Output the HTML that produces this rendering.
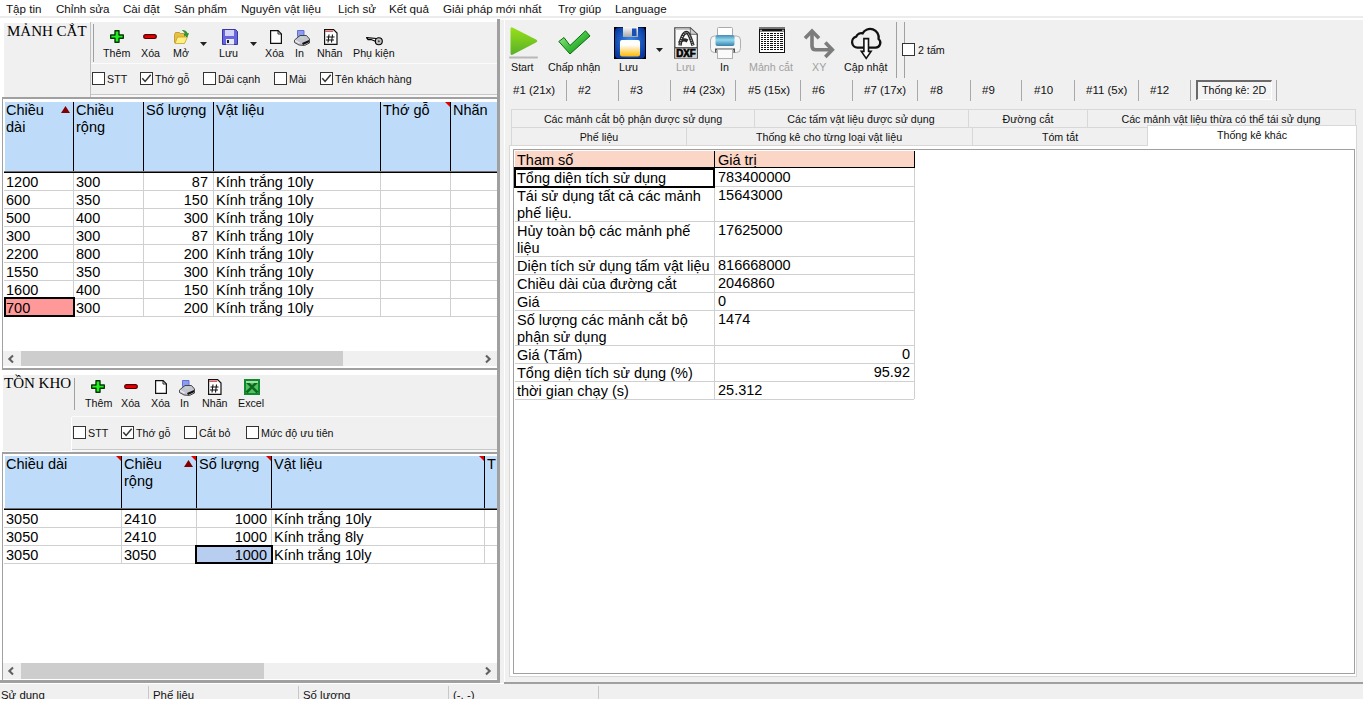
<!DOCTYPE html><html><head><meta charset="utf-8"><style>
*{margin:0;padding:0;box-sizing:border-box}
html,body{width:1366px;height:726px;overflow:hidden;background:#fff;font-family:"Liberation Sans",sans-serif;color:#000}
.a{position:absolute}
.t{position:absolute;white-space:nowrap;line-height:1}
.ml{font-family:"Liberation Serif",serif;font-size:15px;color:#000}
.tb{font-size:10.7px;color:#111}
.tn{font-size:11.5px;color:#111}
.gr{color:#a0a0a0}
.mn{font-size:11.6px;color:#111}
.st{font-size:11.4px;color:#111}
.g{font-size:14.5px;color:#000}
svg{position:absolute;overflow:visible}
</style></head><body>
<div class="t mn" style="left:6px;top:3px;">Tập tin</div>
<div class="t mn" style="left:56px;top:3px;">Chỉnh sửa</div>
<div class="t mn" style="left:123px;top:3px;">Cài đặt</div>
<div class="t mn" style="left:174px;top:3px;">Sản phẩm</div>
<div class="t mn" style="left:241px;top:3px;">Nguyên vật liệu</div>
<div class="t mn" style="left:338px;top:3px;">Lịch sử</div>
<div class="t mn" style="left:389px;top:3px;">Kết quả</div>
<div class="t mn" style="left:443px;top:3px;">Giải pháp mới nhất</div>
<div class="t mn" style="left:558px;top:3px;">Trợ giúp</div>
<div class="t mn" style="left:615px;top:3px;">Language</div>
<div class="a" style="left:0px;top:16px;width:1363px;height:2px;background:#ececec"></div>
<div class="a" style="left:497px;top:19px;width:3px;height:664px;background:#a0a0a0"></div>
<div class="a" style="left:500px;top:20px;width:4px;height:663px;background:#f0f0f0"></div>
<div class="a" style="left:504px;top:20px;width:1px;height:663px;background:#fff"></div>
<div class="a" style="left:4px;top:23px;width:86px;height:74px;background:#f0f0f0"></div>
<div class="t ml" style="left:7px;top:24px;">MẢNH CẮT</div>
<div class="a" style="left:90px;top:22px;width:1px;height:75px;background:#c0c0c0"></div>
<div class="a" style="left:91px;top:22px;width:406px;height:41px;background:#f0f0f0"></div>
<div class="a" style="left:93px;top:24px;width:1px;height:38px;background:#a0a0a0"></div>
<div class="a" style="left:91px;top:63px;width:406px;height:1px;background:#fbfbfb"></div>
<div class="a" style="left:91px;top:64px;width:406px;height:30px;background:#f0f0f0"></div>
<div class="a" style="left:91px;top:94px;width:406px;height:1px;background:#c8c8c8"></div>
<div class="a" style="left:91px;top:95px;width:406px;height:2px;background:#f8f8f8"></div>
<svg style="left:110px;top:30px" width="14" height="13" viewBox="0 0 14 13"><path d="M5 0.7h4v4.3h4.3v3.3h-4.3v4h-4v-4h-4.3v-3.3h4.3z" fill="#20f020" stroke="#063806" stroke-width="1.4" stroke-linejoin="round"/></svg>
<svg style="left:143px;top:34px" width="14" height="5" viewBox="0 0 14 5"><rect x="0.7" y="0.7" width="12.6" height="3.8" rx="1.9" fill="#e80000" stroke="#500000" stroke-width="1.2"/></svg>
<svg style="left:174px;top:30px" width="15" height="14" viewBox="0 0 15 14"><path d="M0.5 4.5l1-2h4l1 1h4v9h-10z" fill="#e8c040" stroke="#b89020" stroke-width="0.8"/><path d="M1 13.5l2.5-6.5h10l-3 6.5z" fill="#fff080" stroke="#c0a030" stroke-width="0.8"/><path d="M8.5 0.5c2.5 0 4.5 1 5 3.5l1-0.5-1.5 3.5-3-2.5 1.5-0.3C11 2.5 10 1.5 8.5 0.5z" fill="#30a030" stroke="#107010" stroke-width="0.6"/></svg>
<svg style="left:200px;top:42px" width="7" height="4" viewBox="0 0 7 4"><path d="M0 0h7l-3.5 4z" fill="#222"/></svg>
<svg style="left:222px;top:29px" width="16" height="16" viewBox="0 0 16 16"><path d="M0.5 0.5h13l2 2v13h-15z" fill="#6666dd" stroke="#3838a0"/><rect x="3" y="1" width="9" height="6" fill="#d4d4fa"/><rect x="4" y="10" width="8" height="5.5" fill="#e8e8f8"/><rect x="5" y="11" width="2" height="3" fill="#222"/></svg>
<svg style="left:250px;top:42px" width="7" height="4" viewBox="0 0 7 4"><path d="M0 0h7l-3.5 4z" fill="#222"/></svg>
<svg style="left:270px;top:30px" width="12" height="14" viewBox="0 0 12 14"><path d="M0.6 0.6h7.5l3.3 3.3v9.5h-10.8z" fill="#fff" stroke="#111" stroke-width="1.2"/><path d="M8 0.6v3.4h3.4" fill="none" stroke="#111" stroke-width="0.9"/></svg>
<svg style="left:294px;top:29px" width="16" height="17" viewBox="0 0 16 17"><path d="M3.5 1.5h6.5v6h-6.5z" fill="#8c9cf4" stroke="#5868c8" stroke-width="0.9"/><path d="M0.5 11L6 6.5h6.5L15.5 10v4l-5 2.5l-5.5-0.5L0.5 13.5z" fill="#c4c4d0" stroke="#383838" stroke-width="0.9"/><path d="M1 11.5l4.5 2.5" stroke="#f0f0f0" stroke-width="1.2"/><path d="M8 14l7-3v2.2l-6 2.8z" fill="#111"/><rect x="6" y="8" width="4" height="1.3" fill="#b8dcb8"/></svg>
<svg style="left:324px;top:29px" width="14" height="16" viewBox="0 0 14 16"><path d="M0.6 0.6h9l3.4 3.4v11.4h-12.4z" fill="#fff" stroke="#111" stroke-width="1.2"/><rect x="1.2" y="1.8" width="8" height="1" fill="#e03030"/><path d="M5 5.5l-1 8M8.5 5.5l-1 8M2.5 8h8M2 11h8" stroke="#111" stroke-width="1.1"/></svg>
<svg style="left:366px;top:37px" width="17" height="9" viewBox="0 0 17 9"><path d="M0.5 0.6L10.5 1.5L10 4.6L5 2.5L2 2.6z" fill="#fff" stroke="#000" stroke-width="1.1" stroke-linejoin="round"/><circle cx="12.8" cy="4.3" r="3.5" fill="#c0c0c0" stroke="#000" stroke-width="1.1"/><circle cx="12.8" cy="4.3" r="1" fill="#444"/></svg>
<div class="t tb" style="left:103px;top:48px;">Thêm</div>
<div class="t tb" style="left:141px;top:48px;">Xóa</div>
<div class="t tb" style="left:173px;top:48px;">Mở</div>
<div class="t tb" style="left:219px;top:48px;">Lưu</div>
<div class="t tb" style="left:265px;top:48px;">Xóa</div>
<div class="t tb" style="left:295px;top:48px;">In</div>
<div class="t tb" style="left:317px;top:48px;">Nhãn</div>
<div class="t tb" style="left:353px;top:48px;">Phụ kiện</div>
<div class="a" style="left:92px;top:72px;width:13px;height:13px;background:#fff;border:1px solid #333"></div>
<div class="t tb" style="left:107px;top:74px;">STT</div>
<div class="a" style="left:140px;top:72px;width:13px;height:13px;background:#fff;border:1px solid #333"></div>
<svg style="left:140px;top:72px" width="13" height="13" viewBox="0 0 13 13"><path d="M2.3 6.2l2.8 3.2l5.6-6.6" fill="none" stroke="#333" stroke-width="1.5"/></svg>
<div class="t tb" style="left:155px;top:74px;">Thớ gỗ</div>
<div class="a" style="left:203px;top:72px;width:13px;height:13px;background:#fff;border:1px solid #333"></div>
<div class="t tb" style="left:218px;top:74px;">Dải cạnh</div>
<div class="a" style="left:274px;top:72px;width:13px;height:13px;background:#fff;border:1px solid #333"></div>
<div class="t tb" style="left:289px;top:74px;">Mài</div>
<div class="a" style="left:320px;top:72px;width:13px;height:13px;background:#fff;border:1px solid #333"></div>
<svg style="left:320px;top:72px" width="13" height="13" viewBox="0 0 13 13"><path d="M2.3 6.2l2.8 3.2l5.6-6.6" fill="none" stroke="#333" stroke-width="1.5"/></svg>
<div class="t tb" style="left:335px;top:74px;">Tên khách hàng</div>
<div class="a" style="left:2px;top:97px;width:495px;height:2px;background:#a0a0a0"></div>
<div class="a" style="left:2px;top:99px;width:1px;height:270px;background:#a0a0a0"></div>
<div class="a" style="left:3px;top:99px;width:494px;height:252px;background:#fff"></div>
<div class="a" style="left:5px;top:102px;width:492px;height:69px;background:#bedcfa"></div>
<div class="a" style="left:73px;top:102px;width:1px;height:69px;background:#000"></div>
<div class="a" style="left:73px;top:173px;width:1px;height:144px;background:#d0d0d0"></div>
<div class="a" style="left:143px;top:102px;width:1px;height:69px;background:#000"></div>
<div class="a" style="left:143px;top:173px;width:1px;height:144px;background:#d0d0d0"></div>
<div class="a" style="left:213px;top:102px;width:1px;height:69px;background:#000"></div>
<div class="a" style="left:213px;top:173px;width:1px;height:144px;background:#d0d0d0"></div>
<div class="a" style="left:380px;top:102px;width:1px;height:69px;background:#000"></div>
<div class="a" style="left:380px;top:173px;width:1px;height:144px;background:#d0d0d0"></div>
<div class="a" style="left:450px;top:102px;width:1px;height:69px;background:#000"></div>
<div class="a" style="left:450px;top:173px;width:1px;height:144px;background:#d0d0d0"></div>
<div class="a" style="left:4px;top:171px;width:493px;height:1px;background:#707070"></div>
<div class="a" style="left:4px;top:172px;width:493px;height:1px;background:#000"></div>
<div class="a" style="left:4px;top:190px;width:493px;height:1px;background:#d0d0d0"></div>
<div class="a" style="left:4px;top:208px;width:493px;height:1px;background:#d0d0d0"></div>
<div class="a" style="left:4px;top:226px;width:493px;height:1px;background:#d0d0d0"></div>
<div class="a" style="left:4px;top:244px;width:493px;height:1px;background:#d0d0d0"></div>
<div class="a" style="left:4px;top:262px;width:493px;height:1px;background:#d0d0d0"></div>
<div class="a" style="left:4px;top:280px;width:493px;height:1px;background:#d0d0d0"></div>
<div class="a" style="left:4px;top:298px;width:493px;height:1px;background:#d0d0d0"></div>
<div class="a" style="left:4px;top:316px;width:493px;height:1px;background:#d0d0d0"></div>
<div class="t g" style="left:6px;top:102px;line-height:17px">Chiều<br>dài</div>
<div class="t g" style="left:76px;top:102px;line-height:17px">Chiều<br>rộng</div>
<div class="t g" style="left:146px;top:102px;line-height:17px">Số lượng</div>
<div class="t g" style="left:216px;top:102px;line-height:17px">Vật liệu</div>
<div class="t g" style="left:383px;top:102px;line-height:17px">Thớ gỗ</div>
<div class="t g" style="left:453px;top:102px;line-height:17px">Nhãn</div>
<svg style="left:61px;top:106px" width="9" height="7" viewBox="0 0 9 7"><path d="M4.5 0l4.5 7h-9z" fill="#800000"/></svg>
<svg style="left:445px;top:102px" width="5" height="5" viewBox="0 0 5 5"><path d="M0 0h5v5z" fill="#e00000"/></svg>
<div class="t g" style="left:6px;top:175px;">1200</div>
<div class="t g" style="left:76px;top:175px;">300</div>
<div class="t g" style="right:1158px;top:175px;">87</div>
<div class="t g" style="left:216px;top:175px;">Kính trắng 10ly</div>
<div class="t g" style="left:6px;top:193px;">600</div>
<div class="t g" style="left:76px;top:193px;">350</div>
<div class="t g" style="right:1158px;top:193px;">150</div>
<div class="t g" style="left:216px;top:193px;">Kính trắng 10ly</div>
<div class="t g" style="left:6px;top:211px;">500</div>
<div class="t g" style="left:76px;top:211px;">400</div>
<div class="t g" style="right:1158px;top:211px;">300</div>
<div class="t g" style="left:216px;top:211px;">Kính trắng 10ly</div>
<div class="t g" style="left:6px;top:229px;">300</div>
<div class="t g" style="left:76px;top:229px;">300</div>
<div class="t g" style="right:1158px;top:229px;">87</div>
<div class="t g" style="left:216px;top:229px;">Kính trắng 10ly</div>
<div class="t g" style="left:6px;top:247px;">2200</div>
<div class="t g" style="left:76px;top:247px;">800</div>
<div class="t g" style="right:1158px;top:247px;">200</div>
<div class="t g" style="left:216px;top:247px;">Kính trắng 10ly</div>
<div class="t g" style="left:6px;top:265px;">1550</div>
<div class="t g" style="left:76px;top:265px;">350</div>
<div class="t g" style="right:1158px;top:265px;">300</div>
<div class="t g" style="left:216px;top:265px;">Kính trắng 10ly</div>
<div class="t g" style="left:6px;top:283px;">1600</div>
<div class="t g" style="left:76px;top:283px;">400</div>
<div class="t g" style="right:1158px;top:283px;">150</div>
<div class="t g" style="left:216px;top:283px;">Kính trắng 10ly</div>
<div class="a" style="left:4px;top:297px;width:71px;height:20px;background:#ff9999;border:2px solid #000"></div>
<div class="t g" style="left:6px;top:301px;">700</div>
<div class="t g" style="left:76px;top:301px;">300</div>
<div class="t g" style="right:1158px;top:301px;">200</div>
<div class="t g" style="left:216px;top:301px;">Kính trắng 10ly</div>
<div class="a" style="left:3px;top:351px;width:494px;height:15px;background:#f0f0f0"></div>
<div class="a" style="left:21px;top:351px;width:322px;height:15px;background:#cdcdcd"></div>
<svg style="left:8px;top:355px" width="6" height="9" viewBox="0 0 6 9"><path d="M5 0.6L1.4 4L5 7.4" fill="none" stroke="#606060" stroke-width="2.1"/></svg>
<svg style="left:485px;top:355px" width="6" height="9" viewBox="0 0 6 9"><path d="M1 0.6L4.6 4L1 7.4" fill="none" stroke="#606060" stroke-width="2.1"/></svg>
<div class="a" style="left:2px;top:368px;width:495px;height:2px;background:#a0a0a0"></div>
<div class="a" style="left:3px;top:375px;width:68px;height:76px;background:#f0f0f0"></div>
<div class="t ml" style="left:4px;top:376px;">TỒN KHO</div>
<div class="a" style="left:71px;top:375px;width:426px;height:42px;background:#f0f0f0"></div>
<div class="a" style="left:74px;top:378px;width:1px;height:32px;background:#a0a0a0"></div>
<div class="a" style="left:72px;top:416px;width:425px;height:1px;background:#fbfbfb"></div>
<div class="a" style="left:72px;top:417px;width:425px;height:32px;background:#f0f0f0"></div>
<div class="a" style="left:72px;top:449px;width:425px;height:1px;background:#c8c8c8"></div>
<div class="a" style="left:72px;top:450px;width:425px;height:2px;background:#f8f8f8"></div>
<svg style="left:91px;top:380px" width="14" height="13" viewBox="0 0 14 13"><path d="M5 0.7h4v4.3h4.3v3.3h-4.3v4h-4v-4h-4.3v-3.3h4.3z" fill="#20f020" stroke="#063806" stroke-width="1.4" stroke-linejoin="round"/></svg>
<svg style="left:124px;top:384px" width="14" height="5" viewBox="0 0 14 5"><rect x="0.7" y="0.7" width="12.6" height="3.8" rx="1.9" fill="#e80000" stroke="#500000" stroke-width="1.2"/></svg>
<svg style="left:155px;top:380px" width="12" height="14" viewBox="0 0 12 14"><path d="M0.6 0.6h7.5l3.3 3.3v9.5h-10.8z" fill="#fff" stroke="#111" stroke-width="1.2"/><path d="M8 0.6v3.4h3.4" fill="none" stroke="#111" stroke-width="0.9"/></svg>
<svg style="left:179px;top:379px" width="16" height="17" viewBox="0 0 16 17"><path d="M3.5 1.5h6.5v6h-6.5z" fill="#8c9cf4" stroke="#5868c8" stroke-width="0.9"/><path d="M0.5 11L6 6.5h6.5L15.5 10v4l-5 2.5l-5.5-0.5L0.5 13.5z" fill="#c4c4d0" stroke="#383838" stroke-width="0.9"/><path d="M1 11.5l4.5 2.5" stroke="#f0f0f0" stroke-width="1.2"/><path d="M8 14l7-3v2.2l-6 2.8z" fill="#111"/><rect x="6" y="8" width="4" height="1.3" fill="#b8dcb8"/></svg>
<svg style="left:208px;top:379px" width="14" height="16" viewBox="0 0 14 16"><path d="M0.6 0.6h9l3.4 3.4v11.4h-12.4z" fill="#fff" stroke="#111" stroke-width="1.2"/><rect x="1.2" y="1.8" width="8" height="1" fill="#e03030"/><path d="M5 5.5l-1 8M8.5 5.5l-1 8M2.5 8h8M2 11h8" stroke="#111" stroke-width="1.1"/></svg>
<svg style="left:244px;top:379px" width="16" height="16" viewBox="0 0 16 16"><rect x="0" y="0" width="16" height="16" fill="#108a30"/><rect x="2" y="2" width="12" height="12" fill="#58c060"/><path d="M2.5 2.5l11 11M13.5 2.5l-11 11" stroke="#0a6a20" stroke-width="2.6"/><rect x="2" y="2" width="12" height="2" fill="#9ee0a0"/></svg>
<div class="t tb" style="left:85px;top:398px;">Thêm</div>
<div class="t tb" style="left:121px;top:398px;">Xóa</div>
<div class="t tb" style="left:151px;top:398px;">Xóa</div>
<div class="t tb" style="left:180px;top:398px;">In</div>
<div class="t tb" style="left:202px;top:398px;">Nhãn</div>
<div class="t tb" style="left:238px;top:398px;">Excel</div>
<div class="a" style="left:73px;top:426px;width:13px;height:13px;background:#fff;border:1px solid #333"></div>
<div class="t tb" style="left:88px;top:428px;">STT</div>
<div class="a" style="left:121px;top:426px;width:13px;height:13px;background:#fff;border:1px solid #333"></div>
<svg style="left:121px;top:426px" width="13" height="13" viewBox="0 0 13 13"><path d="M2.3 6.2l2.8 3.2l5.6-6.6" fill="none" stroke="#333" stroke-width="1.5"/></svg>
<div class="t tb" style="left:136px;top:428px;">Thớ gỗ</div>
<div class="a" style="left:184px;top:426px;width:13px;height:13px;background:#fff;border:1px solid #333"></div>
<div class="t tb" style="left:199px;top:428px;">Cắt bỏ</div>
<div class="a" style="left:246px;top:426px;width:13px;height:13px;background:#fff;border:1px solid #333"></div>
<div class="t tb" style="left:261px;top:428px;">Mức độ ưu tiên</div>
<div class="a" style="left:2px;top:452px;width:495px;height:2px;background:#a0a0a0"></div>
<div class="a" style="left:2px;top:454px;width:1px;height:227px;background:#a0a0a0"></div>
<div class="a" style="left:3px;top:454px;width:494px;height:209px;background:#fff"></div>
<div class="a" style="left:5px;top:456px;width:492px;height:52px;background:#bedcfa"></div>
<div class="a" style="left:121px;top:456px;width:1px;height:52px;background:#000"></div>
<div class="a" style="left:121px;top:510px;width:1px;height:54px;background:#d0d0d0"></div>
<div class="a" style="left:196px;top:456px;width:1px;height:52px;background:#000"></div>
<div class="a" style="left:196px;top:510px;width:1px;height:54px;background:#d0d0d0"></div>
<div class="a" style="left:271px;top:456px;width:1px;height:52px;background:#000"></div>
<div class="a" style="left:271px;top:510px;width:1px;height:54px;background:#d0d0d0"></div>
<div class="a" style="left:484px;top:456px;width:1px;height:52px;background:#000"></div>
<div class="a" style="left:484px;top:510px;width:1px;height:54px;background:#d0d0d0"></div>
<div class="a" style="left:4px;top:508px;width:493px;height:1px;background:#707070"></div>
<div class="a" style="left:4px;top:509px;width:493px;height:1px;background:#000"></div>
<div class="a" style="left:4px;top:527px;width:493px;height:1px;background:#d0d0d0"></div>
<div class="a" style="left:4px;top:545px;width:493px;height:1px;background:#d0d0d0"></div>
<div class="a" style="left:4px;top:563px;width:493px;height:1px;background:#d0d0d0"></div>
<div class="t g" style="left:6px;top:456px;line-height:17px">Chiều dài</div>
<div class="t g" style="left:124px;top:456px;line-height:17px">Chiều<br>rộng</div>
<div class="t g" style="left:199px;top:456px;line-height:17px">Số lượng</div>
<div class="t g" style="left:274px;top:456px;line-height:17px">Vật liệu</div>
<div class="t g" style="left:487px;top:456px;line-height:17px">T</div>
<svg style="left:116px;top:456px" width="5" height="5" viewBox="0 0 5 5"><path d="M0 0h5v5z" fill="#e00000"/></svg>
<svg style="left:191px;top:456px" width="5" height="5" viewBox="0 0 5 5"><path d="M0 0h5v5z" fill="#e00000"/></svg>
<svg style="left:266px;top:456px" width="5" height="5" viewBox="0 0 5 5"><path d="M0 0h5v5z" fill="#e00000"/></svg>
<svg style="left:479px;top:456px" width="5" height="5" viewBox="0 0 5 5"><path d="M0 0h5v5z" fill="#e00000"/></svg>
<svg style="left:184px;top:460px" width="9" height="7" viewBox="0 0 9 7"><path d="M4.5 0l4.5 7h-9z" fill="#800000"/></svg>
<div class="t g" style="left:6px;top:512px;">3050</div>
<div class="t g" style="left:124px;top:512px;">2410</div>
<div class="t g" style="right:1099px;top:512px;">1000</div>
<div class="t g" style="left:274px;top:512px;">Kính trắng 10ly</div>
<div class="t g" style="left:6px;top:530px;">3050</div>
<div class="t g" style="left:124px;top:530px;">2410</div>
<div class="t g" style="right:1099px;top:530px;">1000</div>
<div class="t g" style="left:274px;top:530px;">Kính trắng 8ly</div>
<div class="a" style="left:195px;top:545px;width:78px;height:19px;background:#b8cef0;border:2px solid #000"></div>
<div class="t g" style="left:6px;top:548px;">3050</div>
<div class="t g" style="left:124px;top:548px;">3050</div>
<div class="t g" style="right:1099px;top:548px;">1000</div>
<div class="t g" style="left:274px;top:548px;">Kính trắng 10ly</div>
<div class="a" style="left:3px;top:663px;width:494px;height:16px;background:#f0f0f0"></div>
<div class="a" style="left:21px;top:663px;width:243px;height:16px;background:#cdcdcd"></div>
<svg style="left:8px;top:667px" width="6" height="9" viewBox="0 0 6 9"><path d="M5 0.6L1.4 4L5 7.4" fill="none" stroke="#606060" stroke-width="2.1"/></svg>
<svg style="left:485px;top:667px" width="6" height="9" viewBox="0 0 6 9"><path d="M1 0.6L4.6 4L1 7.4" fill="none" stroke="#606060" stroke-width="2.1"/></svg>
<div class="a" style="left:0px;top:680px;width:497px;height:3px;background:#a0a0a0"></div>
<div class="a" style="left:505px;top:20px;width:858px;height:662px;background:#f0f0f0"></div>
<div class="a" style="left:504px;top:682px;width:859px;height:2px;background:#a0a0a0"></div>
<svg style="left:509px;top:26px" width="30" height="33" viewBox="0 0 30 33"><defs><linearGradient id="gs" x1="0" y1="0" x2="0" y2="1"><stop offset="0" stop-color="#98e018"/><stop offset="1" stop-color="#58b028"/></linearGradient></defs><path d="M1.5 3Q1.5 0.5 4 1.8L27 13.5Q29.5 15 27 16.5L4 28.5Q1.5 29.8 1.5 27z" fill="url(#gs)"/><rect x="0" y="30.5" width="29" height="2" rx="1" fill="#b8b8b8"/></svg>
<svg style="left:558px;top:30px" width="33" height="25" viewBox="0 0 33 25"><defs><linearGradient id="gc" x1="0" y1="0" x2="1" y2="1"><stop offset="0" stop-color="#b0f0a0"/><stop offset="0.5" stop-color="#40c040"/><stop offset="1" stop-color="#108010"/></linearGradient></defs><path d="M0.8 11.5L12 24L32 6L27.5 0.8L12 15.5L6 7.5z" fill="url(#gc)" stroke="#0a700a" stroke-width="1"/></svg>
<svg style="left:614px;top:27px" width="32" height="32" viewBox="0 0 32 32"><defs><radialGradient id="gb" cx="0.5" cy="0.45" r="0.6"><stop offset="0" stop-color="#3a90f0"/><stop offset="1" stop-color="#0838a0"/></radialGradient><linearGradient id="gf" x1="0" y1="0" x2="0" y2="1"><stop offset="0.3" stop-color="#fff"/><stop offset="1" stop-color="#ffb800"/></linearGradient><linearGradient id="gsh" x1="0" y1="0" x2="0" y2="1"><stop offset="0" stop-color="#fafafa"/><stop offset="1" stop-color="#a8a8a8"/></linearGradient></defs><rect x="0" y="0" width="32" height="32" fill="#000"/><rect x="1" y="0.5" width="30" height="31" rx="4" fill="url(#gb)"/><rect x="9" y="0" width="15" height="10" fill="url(#gsh)"/><rect x="18" y="1.5" width="4.5" height="7.5" fill="#1850b8"/><rect x="6" y="13" width="20" height="16.5" rx="2" fill="url(#gf)"/></svg>
<svg style="left:656px;top:48px" width="7" height="4" viewBox="0 0 7 4"><path d="M0 0h7l-3.5 4z" fill="#222"/></svg>
<svg style="left:674px;top:27px" width="24" height="32" viewBox="0 0 24 32"><path d="M0.8 0.8h15.5l7 6.5v23.9h-22.5z" fill="#fafafa" stroke="#4a4a4a" stroke-width="1.3"/><path d="M1.5 1.5h14.5v1.5h-14.5z" fill="#c8c8c8"/><path d="M16.3 0.8v6.5h7z" fill="#d0d0d0" stroke="#4a4a4a" stroke-width="0.8"/><path d="M6 18.5C6.5 12 9.5 5.5 12.5 5.5C15 5.5 17 12 19 18.5M5.5 16C7.5 12 11 12.5 13.5 14" fill="none" stroke="#2a2a2a" stroke-width="3.4"/><path d="M6 18.5C6.5 12 9.5 5.5 12.5 5.5C15 5.5 17 12 19 18.5" fill="none" stroke="#ccc" stroke-width="1.2" stroke-dasharray="1 1.2"/><rect x="1.2" y="21" width="21.6" height="10.2" fill="#d0d0d0"/><path d="M1 20.8h22" stroke="#333" stroke-width="1.2"/><text x="2.2" y="30.2" font-size="11" font-weight="700" font-family="Liberation Sans" fill="#000" stroke="#000" stroke-width="0.7" textLength="19.5" lengthAdjust="spacingAndGlyphs">DXF</text></svg>
<svg style="left:710px;top:27px" width="31" height="32" viewBox="0 0 31 32"><defs><linearGradient id="gp" x1="0" y1="0" x2="0" y2="1"><stop offset="0" stop-color="#4a8ab0"/><stop offset="0.45" stop-color="#90d8f0"/><stop offset="1" stop-color="#3a80a8"/></linearGradient></defs><rect x="7.5" y="0.5" width="15" height="9" rx="1" fill="#fff" stroke="#aaa"/><rect x="0.5" y="9" width="30" height="16.5" rx="4" fill="#f6f6f6" stroke="#b0b0b0"/><rect x="5.5" y="8" width="19" height="11" rx="2" fill="url(#gp)"/><path d="M5 21.5h20v4h-1.5v-2.5h-17v2.5h-1.5z" fill="#505050"/><rect x="7.5" y="22.5" width="15" height="9" fill="#fafafa" stroke="#b0b0b0"/></svg>
<svg style="left:759px;top:27px" width="26" height="26" viewBox="0 0 26 26"><rect x="0.5" y="0.5" width="25" height="25" fill="#fff" stroke="#111"/><rect x="0" y="0" width="26" height="2" fill="#777"/><rect x="0" y="2" width="26" height="2.5" fill="#111"/><rect x="1" y="2.8" width="2" height="1" fill="#ccc"/><rect x="23" y="2.8" width="2" height="1" fill="#ccc"/><rect x="2" y="6" width="2" height="1" fill="#111"/><rect x="5" y="6" width="2" height="1" fill="#111"/><rect x="8" y="6" width="2" height="1" fill="#111"/><rect x="11" y="6" width="3" height="1" fill="#111"/><rect x="15" y="6" width="2" height="1" fill="#111"/><rect x="18" y="6" width="2" height="1" fill="#111"/><rect x="21" y="6" width="3" height="1" fill="#111"/><rect x="2" y="8" width="2" height="1" fill="#111"/><rect x="5" y="8" width="2" height="1" fill="#111"/><rect x="8" y="8" width="2" height="1" fill="#111"/><rect x="11" y="8" width="3" height="1" fill="#111"/><rect x="15" y="8" width="2" height="1" fill="#111"/><rect x="18" y="8" width="2" height="1" fill="#111"/><rect x="21" y="8" width="3" height="1" fill="#111"/><rect x="2" y="10" width="2" height="1" fill="#111"/><rect x="5" y="10" width="2" height="1" fill="#111"/><rect x="8" y="10" width="2" height="1" fill="#111"/><rect x="11" y="10" width="3" height="1" fill="#111"/><rect x="15" y="10" width="2" height="1" fill="#111"/><rect x="18" y="10" width="2" height="1" fill="#111"/><rect x="21" y="10" width="3" height="1" fill="#111"/><rect x="2" y="12" width="2" height="1" fill="#111"/><rect x="5" y="12" width="2" height="1" fill="#111"/><rect x="8" y="12" width="2" height="1" fill="#111"/><rect x="11" y="12" width="3" height="1" fill="#111"/><rect x="15" y="12" width="2" height="1" fill="#111"/><rect x="18" y="12" width="2" height="1" fill="#111"/><rect x="21" y="12" width="3" height="1" fill="#111"/><rect x="2" y="14" width="2" height="1" fill="#111"/><rect x="5" y="14" width="2" height="1" fill="#111"/><rect x="8" y="14" width="2" height="1" fill="#111"/><rect x="11" y="14" width="3" height="1" fill="#111"/><rect x="15" y="14" width="2" height="1" fill="#111"/><rect x="18" y="14" width="2" height="1" fill="#111"/><rect x="21" y="14" width="3" height="1" fill="#111"/><rect x="2" y="16" width="2" height="1" fill="#111"/><rect x="5" y="16" width="2" height="1" fill="#111"/><rect x="8" y="16" width="2" height="1" fill="#111"/><rect x="11" y="16" width="3" height="1" fill="#111"/><rect x="15" y="16" width="2" height="1" fill="#111"/><rect x="18" y="16" width="2" height="1" fill="#111"/><rect x="21" y="16" width="3" height="1" fill="#111"/><rect x="2" y="18" width="2" height="1" fill="#111"/><rect x="5" y="18" width="2" height="1" fill="#111"/><rect x="8" y="18" width="2" height="1" fill="#111"/><rect x="11" y="18" width="3" height="1" fill="#111"/><rect x="15" y="18" width="2" height="1" fill="#111"/><rect x="18" y="18" width="2" height="1" fill="#111"/><rect x="21" y="18" width="3" height="1" fill="#111"/><rect x="2" y="20" width="2" height="1" fill="#111"/><rect x="5" y="20" width="2" height="1" fill="#111"/><rect x="8" y="20" width="2" height="1" fill="#111"/><rect x="11" y="20" width="3" height="1" fill="#111"/><rect x="15" y="20" width="2" height="1" fill="#111"/><rect x="18" y="20" width="2" height="1" fill="#111"/><rect x="21" y="20" width="3" height="1" fill="#111"/><rect x="2" y="22" width="2" height="1" fill="#111"/><rect x="5" y="22" width="2" height="1" fill="#111"/><rect x="8" y="22" width="2" height="1" fill="#111"/><rect x="11" y="22" width="3" height="1" fill="#111"/><rect x="15" y="22" width="2" height="1" fill="#111"/><rect x="18" y="22" width="2" height="1" fill="#111"/><rect x="21" y="22" width="3" height="1" fill="#111"/></svg>
<svg style="left:803px;top:28px" width="31" height="31" viewBox="0 0 31 31"><path d="M9 3V18Q9 21.7 12.7 21.7H28.5" fill="none" stroke="#7c7c7c" stroke-width="3.6"/><path d="M2 10.2L9 3L16 10.2M22.3 14.5L29.3 21.7L22.3 28.9" fill="none" stroke="#7c7c7c" stroke-width="3.6"/></svg>
<svg style="left:850px;top:27px" width="32" height="32" viewBox="0 0 32 32"><path d="M7.5 20.6A5.6 5.6 0 0 1 6.2 9.6A5.5 5.5 0 0 1 12.6 6.4A8.6 8.6 0 0 1 28.6 12A4.9 4.9 0 0 1 25.6 20.6Z" fill="none" stroke="#111" stroke-width="2.3"/><path d="M13.9 11.6h4.6v12.8h2.6l-4.9 7l-4.9-7h2.6z" fill="#fff" stroke="#111" stroke-width="1.6"/></svg>
<div class="t tb" style="left:511px;top:62px;">Start</div>
<div class="t tb" style="left:548px;top:62px;">Chấp nhận</div>
<div class="t tb" style="left:619px;top:62px;">Lưu</div>
<div class="t tb gr" style="left:676px;top:62px;">Lưu</div>
<div class="t tb" style="left:720px;top:62px;">In</div>
<div class="t tb gr" style="left:749px;top:62px;">Mảnh cắt</div>
<div class="t tb gr" style="left:812px;top:62px;">XY</div>
<div class="t tb" style="left:844px;top:62px;">Cập nhật</div>
<div class="a" style="left:896px;top:22px;width:1px;height:56px;background:#a0a0a0"></div>
<div class="a" style="left:904px;top:22px;width:1px;height:56px;background:#a0a0a0"></div>
<div class="a" style="left:902px;top:43px;width:13px;height:13px;background:#fff;border:1px solid #333"></div>
<div class="t tb" style="left:918px;top:45px;">2 tấm</div>
<div class="a" style="left:566px;top:80px;width:1px;height:21px;background:#a8a8a8"></div>
<div class="a" style="left:618px;top:80px;width:1px;height:21px;background:#a8a8a8"></div>
<div class="a" style="left:670px;top:80px;width:1px;height:21px;background:#a8a8a8"></div>
<div class="a" style="left:735px;top:80px;width:1px;height:21px;background:#a8a8a8"></div>
<div class="a" style="left:800px;top:80px;width:1px;height:21px;background:#a8a8a8"></div>
<div class="a" style="left:852px;top:80px;width:1px;height:21px;background:#a8a8a8"></div>
<div class="a" style="left:917px;top:80px;width:1px;height:21px;background:#a8a8a8"></div>
<div class="a" style="left:970px;top:80px;width:1px;height:21px;background:#a8a8a8"></div>
<div class="a" style="left:1021px;top:80px;width:1px;height:21px;background:#a8a8a8"></div>
<div class="a" style="left:1074px;top:80px;width:1px;height:21px;background:#a8a8a8"></div>
<div class="a" style="left:1138px;top:80px;width:1px;height:21px;background:#a8a8a8"></div>
<div class="a" style="left:1190px;top:80px;width:1px;height:21px;background:#a8a8a8"></div>
<div class="a" style="left:1276px;top:80px;width:1px;height:21px;background:#a8a8a8"></div>
<div class="t tn" style="left:513px;top:85px;">#1 (21x)</div>
<div class="t tn" style="left:578px;top:85px;">#2</div>
<div class="t tn" style="left:630px;top:85px;">#3</div>
<div class="t tn" style="left:683px;top:85px;">#4 (23x)</div>
<div class="t tn" style="left:748px;top:85px;">#5 (15x)</div>
<div class="t tn" style="left:812px;top:85px;">#6</div>
<div class="t tn" style="left:864px;top:85px;">#7 (17x)</div>
<div class="t tn" style="left:930px;top:85px;">#8</div>
<div class="t tn" style="left:982px;top:85px;">#9</div>
<div class="t tn" style="left:1034px;top:85px;">#10</div>
<div class="t tn" style="left:1086px;top:85px;">#11 (5x)</div>
<div class="t tn" style="left:1150px;top:85px;">#12</div>
<div class="a" style="left:1196px;top:80px;width:76px;height:20px;background:#f4f4f4;border-top:2px solid #6a6a6a;border-left:2px solid #6a6a6a;border-right:1px solid #fff;border-bottom:1px solid #fff"></div>
<div class="t tb" style="left:1202px;top:85px;">Thống kê: 2D</div>
<div class="a" style="left:511px;top:109px;width:845px;height:37px;background:#f0f0f0;border:1px solid #d8d8d8;border-bottom:none"></div>
<div class="a" style="left:512px;top:127px;width:843px;height:1px;background:#d8d8d8"></div>
<div class="a" style="left:754px;top:110px;width:1px;height:17px;background:#d8d8d8"></div>
<div class="a" style="left:968px;top:110px;width:1px;height:17px;background:#d8d8d8"></div>
<div class="a" style="left:1087px;top:110px;width:1px;height:17px;background:#d8d8d8"></div>
<div class="t tb" style="left:433px;width:400px;text-align:center;top:114px;">Các mảnh cắt bộ phận được sử dụng</div>
<div class="t tb" style="left:661px;width:400px;text-align:center;top:114px;">Các tấm vật liệu được sử dụng</div>
<div class="t tb" style="left:828px;width:400px;text-align:center;top:114px;">Đường cắt</div>
<div class="t tb" style="left:1021px;width:400px;text-align:center;top:114px;">Các mảnh vật liệu thừa có thể tái sử dụng</div>
<div class="a" style="left:686px;top:128px;width:1px;height:17px;background:#d8d8d8"></div>
<div class="a" style="left:972px;top:128px;width:1px;height:17px;background:#d8d8d8"></div>
<div class="a" style="left:509px;top:145px;width:848px;height:532px;background:#fff;border:1px solid #d8d8d8"></div>
<div class="a" style="left:1147px;top:125px;width:210px;height:21px;background:#fff;border:1px solid #d8d8d8;border-bottom:none"></div>
<div class="t tb" style="left:399px;width:400px;text-align:center;top:132px;">Phế liệu</div>
<div class="t tb" style="left:629px;width:400px;text-align:center;top:132px;">Thống kê cho từng loại vật liệu</div>
<div class="t tb" style="left:860px;width:400px;text-align:center;top:132px;">Tóm tắt</div>
<div class="t tb" style="left:1052px;width:400px;text-align:center;top:130px;">Thống kê khác</div>
<div class="a" style="left:513px;top:149px;width:842px;height:525px;background:#fff;border:1px solid #a0a0a0"></div>
<div class="a" style="left:515px;top:151px;width:399px;height:17px;background:#fbd5c5"></div>
<div class="a" style="left:714px;top:151px;width:1px;height:17px;background:#000"></div>
<div class="a" style="left:515px;top:186px;width:399px;height:1px;background:#d0d0d0"></div>
<div class="a" style="left:515px;top:221px;width:399px;height:1px;background:#d0d0d0"></div>
<div class="a" style="left:515px;top:256px;width:399px;height:1px;background:#d0d0d0"></div>
<div class="a" style="left:515px;top:274px;width:399px;height:1px;background:#d0d0d0"></div>
<div class="a" style="left:515px;top:292px;width:399px;height:1px;background:#d0d0d0"></div>
<div class="a" style="left:515px;top:310px;width:399px;height:1px;background:#d0d0d0"></div>
<div class="a" style="left:515px;top:345px;width:399px;height:1px;background:#d0d0d0"></div>
<div class="a" style="left:515px;top:363px;width:399px;height:1px;background:#d0d0d0"></div>
<div class="a" style="left:515px;top:381px;width:399px;height:1px;background:#d0d0d0"></div>
<div class="a" style="left:515px;top:399px;width:399px;height:1px;background:#d0d0d0"></div>
<div class="a" style="left:714px;top:168px;width:1px;height:231px;background:#d0d0d0"></div>
<div class="a" style="left:914px;top:168px;width:1px;height:231px;background:#d0d0d0"></div>
<div class="a" style="left:515px;top:167px;width:400px;height:1px;background:#000"></div>
<div class="a" style="left:914px;top:151px;width:1px;height:17px;background:#000"></div>
<div class="t g" style="left:517px;top:153px;">Tham số</div>
<div class="t g" style="left:718px;top:153px;">Giá trị</div>
<div class="t g" style="left:517px;top:170px;line-height:17px">Tổng diện tích sử dụng</div>
<div class="t g" style="left:718px;top:170px;">783400000</div>
<div class="t g" style="left:517px;top:188px;line-height:17px">Tái sử dụng tất cả các mảnh<br>phế liệu.</div>
<div class="t g" style="left:718px;top:188px;">15643000</div>
<div class="t g" style="left:517px;top:223px;line-height:17px">Hủy toàn bộ các mảnh phế<br>liệu</div>
<div class="t g" style="left:718px;top:223px;">17625000</div>
<div class="t g" style="left:517px;top:258px;line-height:17px">Diện tích sử dụng tấm vật liệu</div>
<div class="t g" style="left:718px;top:258px;">816668000</div>
<div class="t g" style="left:517px;top:276px;line-height:17px">Chiều dài của đường cắt</div>
<div class="t g" style="left:718px;top:276px;">2046860</div>
<div class="t g" style="left:517px;top:294px;line-height:17px">Giá</div>
<div class="t g" style="left:718px;top:294px;">0</div>
<div class="t g" style="left:517px;top:312px;line-height:17px">Số lượng các mảnh cắt bộ<br>phận sử dụng</div>
<div class="t g" style="left:718px;top:312px;">1474</div>
<div class="t g" style="left:517px;top:347px;line-height:17px">Giá (Tấm)</div>
<div class="t g" style="right:456px;top:347px;">0</div>
<div class="t g" style="left:517px;top:365px;line-height:17px">Tổng diện tích sử dụng (%)</div>
<div class="t g" style="right:456px;top:365px;">95.92</div>
<div class="t g" style="left:517px;top:383px;line-height:17px">thời gian chạy (s)</div>
<div class="t g" style="left:718px;top:383px;">25.312</div>
<div class="a" style="left:514px;top:167px;width:201px;height:21px;border:2px solid #000;border-top-width:3px"></div>
<div class="a" style="left:0;top:684px;width:1363px;height:15px;background:#f0f0f0;overflow:hidden">
<div class="t st" style="left:1px;top:6px">Sử dụng</div>
<div class="t st" style="left:153px;top:6px">Phế liệu</div>
<div class="t st" style="left:303px;top:6px">Số lượng</div>
<div class="t st" style="left:453px;top:6px">(-, -)</div>
<div class="a" style="left:148px;top:2px;width:1px;height:13px;background:#c8c8c8"></div>
<div class="a" style="left:298px;top:2px;width:1px;height:13px;background:#c8c8c8"></div>
<div class="a" style="left:448px;top:2px;width:1px;height:13px;background:#c8c8c8"></div>
<div class="a" style="left:598px;top:2px;width:1px;height:13px;background:#c8c8c8"></div>
</div>
</body></html>
